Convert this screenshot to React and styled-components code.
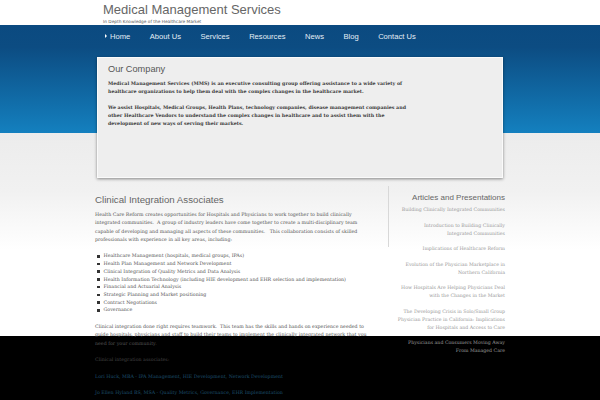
import React from "react";
import styled, { createGlobalStyle } from "styled-components";

const Global = createGlobalStyle`
  html, body { margin: 0; padding: 0; background: #000; }
  body { font-family: "Liberation Sans", Arial, sans-serif; }
  * { box-sizing: border-box; }
`;

const Page = styled.div`
  min-height: 400px;
  background: linear-gradient(
    to bottom,
    #ffffff 0px,
    #ffffff 25px,
    #0b4a80 25px,
    #0c4c82 47px,
    #1480bf 133px,
    #ececec 133px,
    #f1f1f1 190px,
    #ffffff 250px,
    #ffffff 336px,
    #000000 336px
  );
`;

const Inner = styled.div`
  width: 410px;
  margin: 0 auto;
`;

const Header = styled.header`
  height: 25px;
  padding-top: 1px;
  padding-left: 8px;
`;

const Title = styled.h1`
  margin: 0;
  font-family: "Liberation Sans", Arial, sans-serif;
  font-weight: normal;
  font-size: 13px;
  line-height: 17px;
  color: #666;
`;

const Tagline = styled.div`
  font-family: "DejaVu Sans", sans-serif;
  font-size: 4.3px;
  color: #555;
  margin-top: 1px;
`;

const Nav = styled.nav`
  height: 22px;
  display: flex;
  align-items: center;
  padding-left: 10px;
  gap: 19.5px;
`;

const NavItem = styled.a`
  font-family: "Liberation Sans", Arial, sans-serif;
  font-size: 7.6px;
  color: #e4eef6;
  text-decoration: none;
  display: flex;
  align-items: center;
  gap: 3px;
`;

const Arrow = styled.span`
  width: 0;
  height: 0;
  border-top: 2px solid transparent;
  border-bottom: 2px solid transparent;
  border-left: 2.5px solid #fff;
`;

const Card = styled.section`
  margin: 10px 2px 0;
  height: 121px;
  background: #eeeeee;
  border: 1px solid #fafafa;
  box-shadow: 0 1px 3px rgba(0, 0, 0, 0.45);
  padding: 5px 10px;
`;

const CardTitle = styled.h2`
  margin: 0 0 5px;
  font-family: "Liberation Sans", Arial, sans-serif;
  font-weight: normal;
  font-size: 9.2px;
  line-height: 12px;
  color: #555;
`;

const CardText = styled.p`
  margin: 0 0 8px;
  width: 302px;
  font-family: "DejaVu Serif", serif;
  font-weight: bold;
  font-size: 4.75px;
  line-height: 7.9px;
  color: #3a3a3a;
`;

const Content = styled.div`
  display: flex;
  margin-top: 14px;
`;

const Main = styled.main`
  width: 293px;
  padding-right: 20px;
`;

const Heading = styled.h2`
  margin: 0 0 5px;
  padding-top: 2px;
  font-family: "Liberation Sans", Arial, sans-serif;
  font-weight: normal;
  font-size: 9.7px;
  line-height: 12px;
  color: #666;
`;

const Text = styled.p`
  margin: 0 0 8.3px;
  font-family: "DejaVu Serif", serif;
  font-size: 4.75px;
  line-height: 8.3px;
  color: ${(p) => p.$color || "#555"};
`;

const List = styled.ul`
  margin: 0 0 9px;
  padding: 0;
  list-style: none;
`;

const Item = styled.li`
  display: flex;
  align-items: center;
  gap: 4px;
  padding-left: 2px;
  font-family: "DejaVu Serif", serif;
  font-size: 4.75px;
  line-height: 7.7px;
  color: #555;
  &::before {
    content: "";
    flex: none;
    width: 2.5px;
    height: 2.5px;
    background: #333;
  }
`;

const Link = styled.a`
  color: #1c4f6d;
  text-decoration: none;
`;

const Side = styled.aside`
  flex: 1;
  position: relative;
  text-align: right;
  padding-top: 1px;
  &::before {
    content: "";
    position: absolute;
    left: 0;
    top: -6px;
    width: 1px;
    height: 61px;
    background: #d8d8d8;
  }
`;

const SideTitle = styled.h3`
  margin: 0 0 3px;
  font-family: "Liberation Sans", Arial, sans-serif;
  font-weight: normal;
  font-size: 8px;
  line-height: 10px;
  color: #666;
`;

const SideLink = styled.a`
  display: block;
  margin-bottom: 7.5px;
  font-family: "DejaVu Serif", serif;
  font-size: 4.7px;
  line-height: 8px;
  color: #9a9a9a;
  text-decoration: none;
`;

const articles = [
  ["Building Clinically Integrated Communities"],
  ["Introduction to Building Clinically", "Integrated Communities"],
  ["Implications of Healthcare Reform"],
  ["Evolution of the Physician Marketplace in", "Northern California"],
  ["How Hospitals Are Helping Physicians Deal", "with the Changes in the Market"],
  [
    "The Developing Crisis in Solo/Small Group",
    "Physician Practice in California: Implications",
    "for Hospitals and Access to Care",
  ],
  ["Physicians and Consumers Moving Away", "From Managed Care"],
];

const areas = [
  "Healthcare Management (hospitals, medical groups, IPAs)",
  "Health Plan Management and Network Development",
  "Clinical Integration of Quality Metrics and Data Analysis",
  "Health Information Technology (including HIE development and EHR selection and implementation)",
  "Financial and Actuarial Analysis",
  "Strategic Planning and Market positioning",
  "Contract Negotiations",
  "Governance",
];

const navItems = ["Home", "About Us", "Services", "Resources", "News", "Blog", "Contact Us"];

export default function App() {
  return (
    <Page>
      <Global />
      <Inner>
        <Header>
          <Title>Medical Management Services</Title>
          <Tagline>In Depth Knowledge of the Healthcare Market</Tagline>
        </Header>
        <Nav>
          {navItems.map((n, i) => (
            <NavItem key={n} href="#">
              {i === 0 && <Arrow />}
              {n}
            </NavItem>
          ))}
        </Nav>
        <Card>
          <CardTitle>Our Company</CardTitle>
          <CardText>
            Medical Management Services (MMS) is an executive consulting group offering assistance to a wide variety of
            healthcare organizations to help them deal with the complex changes in the healthcare market.
          </CardText>
          <CardText>
            We assist Hospitals, Medical Groups, Health Plans, technology companies, disease management companies and
            other Healthcare Vendors to understand the complex changes in healthcare and to assist them with the
            development of new ways of serving their markets.
          </CardText>
        </Card>
        <Content>
          <Main>
            <Heading>Clinical Integration Associates</Heading>
            <Text>
              Health Care Reform creates opportunities for Hospitals and Physicians to work together to build clinically
              integrated communities.&nbsp; A group of industry leaders have come together to create a multi-disciplinary team
              capable of developing and managing all aspects of these communities.&nbsp;&nbsp; This collaboration consists of skilled
              professionals with experience in all key areas, including:
            </Text>
            <List>
              {areas.map((a) => (
                <Item key={a}>{a}</Item>
              ))}
            </List>
            <Text>
              Clinical integration done right requires teamwork.&nbsp; This team has the skills and hands on experience needed to
              guide hospitals, physicians and staff to build their teams to implement the clinically integrated network that you
              need for your community.
            </Text>
            <Text $color="#444">Clinical integration associates:</Text>
            <Text>
              <Link href="#">Lori Huck, MBA - IPA Management, HIE Development, Network Development</Link>
            </Text>
            <Text>
              <Link href="#">Jo Ellen Hyland BS, MSA - Quality Metrics, Governance, EHR Implementation</Link>
            </Text>
          </Main>
          <Side>
            <SideTitle>Articles and Presentations</SideTitle>
            {articles.map((lines) => (
              <SideLink key={lines[0]} href="#">
                {lines.map((l, i) => (
                  <React.Fragment key={l}>
                    {i > 0 && <br />}
                    {l}
                  </React.Fragment>
                ))}
              </SideLink>
            ))}
          </Side>
        </Content>
      </Inner>
    </Page>
  );
}
